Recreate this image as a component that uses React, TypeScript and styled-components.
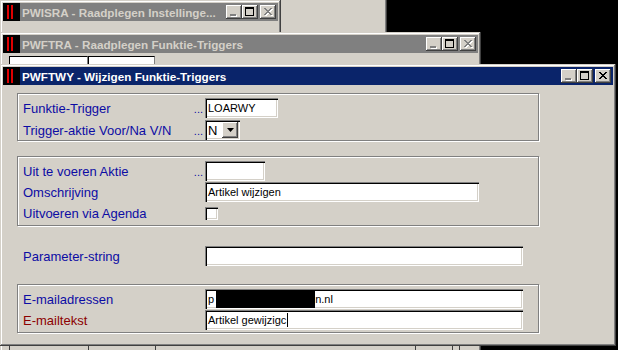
import React from "react";
import styled, { createGlobalStyle } from "styled-components";

const GlobalStyle = createGlobalStyle`
  html, body {
    margin: 0;
    padding: 0;
  }
  body {
    background: #000;
    font-family: "Liberation Sans", Arial, sans-serif;
  }
`;

const Desktop = styled.div`
  position: relative;
  width: 618px;
  height: 350px;
  background: #000;
  overflow: hidden;
`;

// windows on the MDI desktop: their place is the content itself
const Window = styled.div<{ $left: number; $top: number; $width: number; $height: number }>`
  position: absolute;
  left: ${(p) => p.$left}px;
  top: ${(p) => p.$top}px;
  width: ${(p) => p.$width}px;
  height: ${(p) => p.$height}px;
  box-sizing: border-box;
  padding: 3px;
  background: #d4d0c8;
  box-shadow: inset -1px -1px #404040, inset 1px 1px #d4d0c8, inset -2px -2px #808080,
    inset 2px 2px #fff;
  display: flex;
  flex-direction: column;
`;

const TitleBar = styled.div<{ $active?: boolean }>`
  height: 18px;
  flex: 0 0 18px;
  display: flex;
  align-items: center;
  background: ${(p) => (p.$active ? "#0a246a" : "#808080")};
  padding-right: 2px;
`;

const TitleText = styled.div<{ $active?: boolean }>`
  flex: 1;
  margin-left: 2px;
  font-size: 11.7px;
  font-weight: bold;
  color: ${(p) => (p.$active ? "#fff" : "#d4d0c8")};
  white-space: nowrap;
  overflow: hidden;
`;

const CaptionButtons = styled.div`
  display: flex;
  align-items: center;
`;

const CaptionButton = styled.div<{ $gap?: boolean }>`
  width: 16px;
  height: 14px;
  margin-left: ${(p) => (p.$gap ? 2 : 0)}px;
  background: #d4d0c8;
  box-shadow: inset -1px -1px #404040, inset 1px 1px #fff, inset -2px -2px #808080,
    inset 2px 2px #d4d0c8;
  display: flex;
  svg {
    display: block;
  }
`;

const WindowBody = styled.div`
  flex: 1;
  display: flex;
  flex-direction: column;
  padding: 8px 0 0 14px;
`;

const GridBody = styled.div`
  flex: 1;
  display: flex;
  flex-direction: column;
  justify-content: space-between;
  padding: 3px 0 0 6px;
`;

const CellRow = styled.div`
  display: flex;
`;

const Cell = styled.div<{ $w: number }>`
  width: ${(p) => p.$w}px;
  height: 20px;
  box-sizing: border-box;
  background: #fff;
  border-top: 1px solid #000;
  border-left: 1px solid #000;
  border-right: 1px solid #808080;
`;

const LineCell = styled.div<{ $w: number }>`
  width: ${(p) => p.$w}px;
  height: 14px;
  box-sizing: border-box;
  border-left: 1px solid #404040;
`;

const Group = styled.fieldset<{ $mt: number; $pb: number }>`
  margin: ${(p) => p.$mt}px 0 0 0;
  width: 522px;
  box-sizing: border-box;
  border: 1px solid #808080;
  box-shadow: 1px 1px 0 #fff, inset 1px 1px 0 #fff;
  padding: 4px 0 ${(p) => p.$pb}px 5px;
  display: flex;
  flex-direction: column;
  gap: 1px;
`;

const Row = styled.div<{ $indent?: number; $mt?: number }>`
  height: 20px;
  margin: ${(p) => p.$mt ?? 0}px 0 0 ${(p) => p.$indent ?? 0}px;
  display: flex;
  align-items: center;
`;

const LabelCell = styled.div`
  width: 182px;
  height: 100%;
  display: flex;
  align-items: center;
`;

const Label = styled.span<{ $red?: boolean }>`
  flex: 1;
  font-size: 13px;
  color: ${(p) => (p.$red ? "#8c0000" : "#0c0ca4")};
  white-space: nowrap;
`;

const Dots = styled.span`
  align-self: flex-end;
  margin: 0 2px 3px 0;
  font-size: 11px;
  line-height: 11px;
  color: #0c0ca4;
`;

const Field = styled.div<{ $w: number }>`
  width: ${(p) => p.$w}px;
  height: 20px;
  box-sizing: border-box;
  padding: 0 3px;
  background: #fff;
  box-shadow: inset 1px 1px #808080, inset 2px 2px #000, inset -1px -1px #fff,
    inset -2px -2px #d4d0c8;
  display: flex;
  align-items: center;
  font-size: 11px;
  color: #000;
  white-space: nowrap;
  overflow: hidden;
`;

const Redacted = styled.span`
  display: inline-block;
  width: 99px;
  height: 18px;
  margin-left: 2px;
  background: #000;
`;

const Caret = styled.span`
  display: inline-block;
  width: 1px;
  height: 14px;
  margin-left: 1px;
  background: #000;
`;

const Select = styled(Field)`
  padding: 0 2px 0 3px;
  justify-content: space-between;
  font-size: 13px;
`;

const DropButton = styled.div`
  width: 16px;
  height: 16px;
  background: #d4d0c8;
  box-shadow: inset -1px -1px #404040, inset 1px 1px #fff, inset -2px -2px #808080;
  display: flex;
  align-items: center;
  justify-content: center;
`;

const CheckBox = styled.div`
  width: 13px;
  height: 13px;
  box-sizing: border-box;
  background: #fff;
  box-shadow: inset 1px 1px #808080, inset 2px 2px #000, inset -1px -1px #fff,
    inset -2px -2px #d4d0c8;
`;

const AppIcon = () => (
  <svg width="17" height="18" viewBox="0 0 17 18">
    <rect width="17" height="18" fill="#000" />
    <rect x="4" y="2" width="2" height="14" fill="#e00000" />
    <rect x="8" y="2" width="2" height="14" fill="#e00000" />
  </svg>
);

const Glyph = ({ kind, disabled }: { kind: "min" | "max" | "close"; disabled?: boolean }) => {
  const shape = (color: string, dx: number) => {
    if (kind === "min") return <rect x={4 + dx} y={9 + dx} width={6} height={2} fill={color} />;
    if (kind === "max")
      return (
        <g fill="none" stroke={color}>
          <rect x={3.5 + dx} y={2.5 + dx} width={8} height={8} />
          <line x1={3 + dx} y1={3.5 + dx} x2={12 + dx} y2={3.5 + dx} />
        </g>
      );
    const rows = [
      [0, 1, 6, 7],
      [1, 2, 5, 6],
      [2, 5],
      [3, 4],
      [2, 5],
      [1, 2, 5, 6],
      [0, 1, 6, 7],
    ];
    return (
      <g fill={color}>
        {rows.map((r, y) =>
          r.length === 4 ? (
            <React.Fragment key={y}>
              <rect x={4 + r[0] + dx} y={3 + y + dx} width={2} height={1} />
              <rect x={4 + r[2] + dx} y={3 + y + dx} width={2} height={1} />
            </React.Fragment>
          ) : (
            <rect key={y} x={4 + r[0] + dx} y={3 + y + dx} width={r[1] - r[0] + 1} height={1} />
          )
        )}
      </g>
    );
  };
  return (
    <svg width="16" height="14" viewBox="0 0 16 14" shapeRendering="crispEdges">
      {disabled ? (
        <>
          {shape("#fff", 1)}
          {shape("#808080", 0)}
        </>
      ) : (
        shape("#000", 0)
      )}
    </svg>
  );
};

const Caption = ({ title, active }: { title: string; active?: boolean }) => (
  <TitleBar $active={active}>
    <AppIcon />
    <TitleText $active={active}>{title}</TitleText>
    <CaptionButtons>
      <CaptionButton>
        <Glyph kind="min" disabled />
      </CaptionButton>
      <CaptionButton>
        <Glyph kind="max" />
      </CaptionButton>
      <CaptionButton $gap>
        <Glyph kind="close" disabled={!active} />
      </CaptionButton>
    </CaptionButtons>
  </TitleBar>
);

const App = () => {
  return (
    <Desktop>
      <GlobalStyle />
      <Window $left={-4} $top={-40} $width={391} $height={110} />

      <Window $left={0} $top={0} $width={281} $height={80}>
        <Caption title="PWISRA - Raadplegen Instellinge..." />
      </Window>

      <Window $left={0} $top={32} $width={481} $height={330}>
        <Caption title="PWFTRA - Raadplegen Funktie-Triggers" />
        <GridBody>
          <CellRow>
            <Cell $w={79} />
            <Cell $w={67} />
          </CellRow>
          <CellRow>
            <LineCell $w={79} />
            <LineCell $w={67} />
            <LineCell $w={260} />
            <LineCell $w={37} />
            <LineCell $w={7} />
            <LineCell $w={16} />
          </CellRow>
        </GridBody>
      </Window>

      <Window $left={0} $top={64} $width={616} $height={282}>
        <Caption title="PWFTWY - Wijzigen Funktie-Triggers" active />
        <WindowBody>
          <Group $mt={0} $pb={0}>
            <Row>
              <LabelCell>
                <Label>Funktie-Trigger</Label>
                <Dots>...</Dots>
              </LabelCell>
              <Field $w={73}>LOARWY</Field>
            </Row>
            <Row $mt={1}>
              <LabelCell>
                <Label>Trigger-aktie Voor/Na V/N</Label>
                <Dots>...</Dots>
              </LabelCell>
              <Select $w={35}>
                N
                <DropButton>
                  <svg width="7" height="4" viewBox="0 0 7 4">
                    <path d="M0 0h7L3.5 4z" fill="#000" />
                  </svg>
                </DropButton>
              </Select>
            </Row>
          </Group>

          <Group $mt={15} $pb={2}>
            <Row>
              <LabelCell>
                <Label>Uit te voeren Aktie</Label>
                <Dots>...</Dots>
              </LabelCell>
              <Field $w={60} />
            </Row>
            <Row>
              <LabelCell>
                <Label>Omschrijving</Label>
              </LabelCell>
              <Field $w={274}>Artikel wijzigen</Field>
            </Row>
            <Row>
              <LabelCell>
                <Label>Uitvoeren via Agenda</Label>
              </LabelCell>
              <CheckBox />
            </Row>
          </Group>

          <Row $mt={20} $indent={6}>
            <LabelCell>
              <Label>Parameter-string</Label>
            </LabelCell>
            <Field $w={318} />
          </Row>

          <Group $mt={18} $pb={2}>
            <Row>
              <LabelCell>
                <Label>E-mailadressen</Label>
              </LabelCell>
              <Field $w={318}>
                p<Redacted />n.nl
              </Field>
            </Row>
            <Row>
              <LabelCell>
                <Label $red>E-mailtekst</Label>
              </LabelCell>
              <Field $w={318}>
                Artikel gewijzigc<Caret />
              </Field>
            </Row>
          </Group>
        </WindowBody>
      </Window>
    </Desktop>
  );
};

export default App;
